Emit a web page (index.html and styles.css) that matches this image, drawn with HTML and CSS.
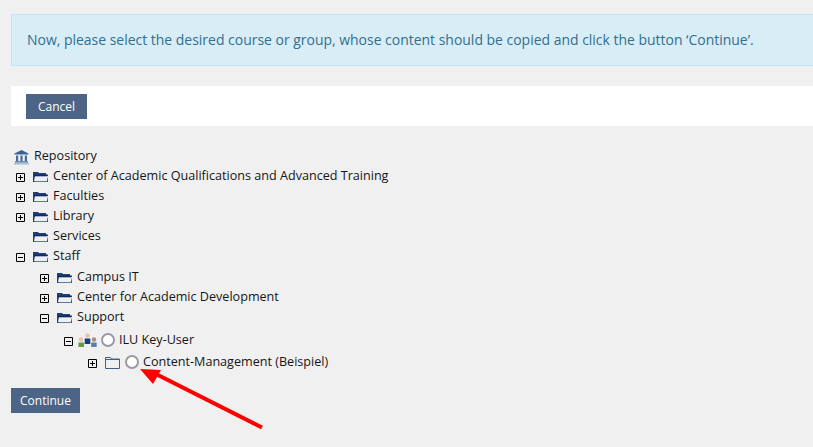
FILE: index.html
```html
<!DOCTYPE html>
<html lang="en">
<head>
<meta charset="utf-8">
<title>Copy content</title>
<link rel="stylesheet" href="styles.css">
</head>
<body>
<svg class="defs" width="0" height="0" aria-hidden="true">
  <symbol id="open" viewBox="0 0 15 10">
    <path d="M0 0h5l1 1h7v1.500h2V4H2L1 9h13l1-5v6H0z" fill="#1f3f78"/>
    <path d="M1 3.500h13" stroke="#0f2a5c" stroke-width="1.600"/>
    <path d="M1.500 9.500h13" stroke="#5d7aa6" stroke-width="1"/>
  </symbol>
  <symbol id="plus" viewBox="0 0 9 9">
    <path d="M.5.5h8v8h-8zM2 4.500h5M4.500 2v5" fill="none" stroke="#000" stroke-width="1"/>
  </symbol>
  <symbol id="minus" viewBox="0 0 9 9">
    <path d="M.5.5h8v8h-8zM2 4.500h5" fill="none" stroke="#000" stroke-width="1"/>
  </symbol>
</svg>
<div class="message">Now, please select the desired course or group, whose content should be copied and click the button ‘Continue’.</div>
<div class="toolbar"><button class="btn btn-cancel" type="button">Cancel</button></div>
<div class="tree">
  <div class="row root">
    <svg class="repo" viewBox="0 0 15 15"><path d="M7.500 0l7 3.400v1.100H.5V3.400z" fill="#3a6296"/><path d="M2 5.500h2.200v5.500H2zM6.400 5.500h2.200v5.500H6.400zM10.800 5.500H13v5.500h-2.200z" fill="#456c9e"/><path d="M1 11.300h13v1.200H1z" fill="#3a6296"/><path d="M0 13h15v1.600H0z" fill="#aebdd2"/></svg>
    <span>Repository</span>
  </div>
  <div class="row"><svg class="tog"><use href="#plus"/></svg><svg class="fld"><use href="#open"/></svg><span>Center of Academic Qualifications and Advanced Training</span></div>
  <div class="row"><svg class="tog"><use href="#plus"/></svg><svg class="fld"><use href="#open"/></svg><span>Faculties</span></div>
  <div class="row"><svg class="tog"><use href="#plus"/></svg><svg class="fld"><use href="#open"/></svg><span>Library</span></div>
  <div class="row"><span class="tog"></span><svg class="fld"><use href="#open"/></svg><span>Services</span></div>
  <div class="row"><svg class="tog"><use href="#minus"/></svg><svg class="fld"><use href="#open"/></svg><span>Staff</span></div>
  <div class="children">
    <div class="row"><svg class="tog"><use href="#plus"/></svg><svg class="fld"><use href="#open"/></svg><span>Campus IT</span></div>
    <div class="row"><svg class="tog"><use href="#plus"/></svg><svg class="fld"><use href="#open"/></svg><span>Center for Academic Development</span></div>
    <div class="row"><svg class="tog"><use href="#minus"/></svg><svg class="fld"><use href="#open"/></svg><span>Support</span></div>
    <div class="children inner">
      <div class="row">
        <svg class="tog"><use href="#minus"/></svg>
        <svg class="group" viewBox="0 0 19 14">
          <circle cx="3" cy="6.500" r="2.200" fill="#e8c4a4"/><path d="M.5 9.500h5.500V14H.5z" fill="#5f9e42"/>
          <circle cx="9.500" cy="2.500" r="2.300" fill="#e8c4a4"/><path d="M6.700 5.500h5.600V11H6.700z" fill="#123f80"/>
          <circle cx="16" cy="6.500" r="2.200" fill="#a98e7c"/><path d="M13.200 9.500h5.500V14h-5.500z" fill="#5b7ea8"/>
        </svg>
        <span class="radio"></span><span>ILU Key-User</span>
      </div>
      <div class="children deep">
        <div class="row">
          <svg class="tog"><use href="#plus"/></svg>
          <svg class="closed" viewBox="0 0 15 12"><path d="M.5 11.500V.5h5l1 1.500h8v9.500zM.5 2.500h14" fill="none" stroke="#3f5f8f" stroke-width="1"/></svg>
          <span class="radio"></span><span>Content-Management (Beispiel)</span>
        </div>
      </div>
    </div>
  </div>
</div>
<div class="actions"><button class="btn btn-continue" type="button">Continue</button></div>
<svg class="arrow" width="140" height="75" viewBox="0 0 140 75" aria-hidden="true">
  <path d="M132 67.500L22 12" stroke="#f00" stroke-width="4" fill="none"/>
  <path d="M10 9l21 1-8 14z" fill="#f00"/>
</svg>
</body>
</html>
```
FILE: styles.css
```css
* { box-sizing: border-box; }
html, body { margin: 0; padding: 0; height: 100%; overflow: hidden; }
body {
  position: relative;
  background: #f0f0f0;
  color: #161616;
  font: 12.6px/20px "Open Sans", sans-serif;
  padding: 14px 0 0 11px;
}
.defs { position: absolute; }
.message {
  height: 52px;
  display: flex;
  align-items: center;
  white-space: nowrap;
  background: #d9edf7;
  border: 1px solid #bce8f1;
  border-right: 0;
  color: #31708f;
  font-size: 13.96px;
  padding-left: 15px;
}
.toolbar {
  margin-top: 20px;
  height: 40px;
  padding: 8px 15px;
  background: #fff;
}
.btn {
  display: block;
  height: 25px;
  border: 0;
  border-radius: 0;
  background: #4c6586;
  color: #fff;
  font: 12px/25px "Open Sans", sans-serif;
}
.btn-cancel { width: 61px; padding: 0 12px; }
.btn-continue { width: 69px; padding: 0 9px; }
.tree { margin-top: 20px; margin-left: 3px; }
.row { display: flex; align-items: center; height: 20px; white-space: nowrap; }
.repo { width: 15px; height: 15px; margin: 2px 5px 0 0; }
.tog { width: 9px; height: 9px; margin: 2px 8px 0 2px; flex: none; display: block; }
.fld { width: 15px; height: 10px; margin: 2px 5px 0 0; flex: none; }
.children { margin-left: 24px; padding-top: 1px; }
.inner { margin-left: 24px; padding-top: 3px; }
.deep { margin-left: 24px; padding-top: 2px; }
.group { width: 19px; height: 14px; margin: 0 4px 0 -3px; flex: none; }
.closed { width: 15px; height: 12px; margin: 2px 5px 0 0; flex: none; }
.radio {
  width: 14px; height: 14px;
  border: 2px solid #9a9aa6;
  border-radius: 50%;
  background: #fff;
  margin-right: 4px;
  flex: none;
}
.actions { margin-top: 16px; }
.arrow { position: absolute; left: 130px; top: 360px; }
```
